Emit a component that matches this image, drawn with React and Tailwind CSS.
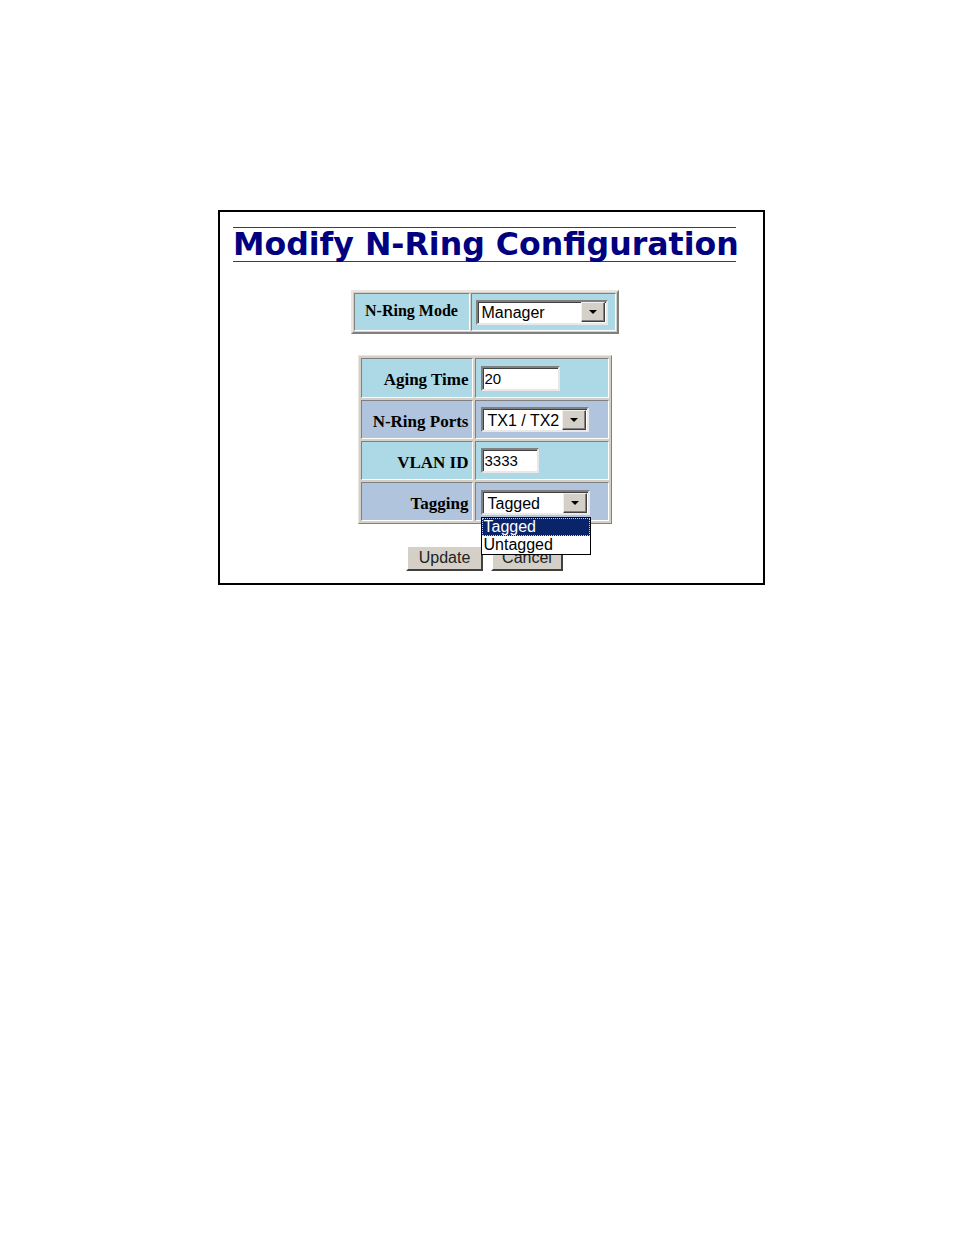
import React from 'react';

const serif = { fontFamily: '"Liberation Serif", "Times New Roman", serif' };
const sans = { fontFamily: '"Liberation Sans", Arial, sans-serif' };

const Arrow = () => (
  <div className="flex items-center justify-center w-[24px] h-[20px] bg-[#d4d0c8] border border-t-[#f0f0f0] border-l-[#f0f0f0] border-b-[#404040] border-r-[#404040] shadow-[inset_-1px_-1px_0_#808080]">
    <svg width="8" height="4" viewBox="0 0 8 4">
      <polygon points="0,0 8,0 4,4" fill="#000" />
    </svg>
  </div>
);

const Select = ({ value, width, pad = 5 }) => (
  <div
    className="inline-flex items-center justify-between h-[25px] bg-white border-2 border-t-[#808080] border-l-[#808080] border-b-[#e8e8e8] border-r-[#e8e8e8] shadow-[inset_1px_1px_0_#404040] pr-[1px]"
    style={{ width, paddingLeft: pad }}
  >
    <span className="text-[16px] leading-none text-black pt-[2px]" style={sans}>{value}</span>
    <Arrow />
  </div>
);

const Input = ({ value, width }) => (
  <div
    className="inline-flex items-center h-[25px] bg-white border-2 border-t-[#808080] border-l-[#808080] border-b-[#e8e8e8] border-r-[#e8e8e8] shadow-[inset_1px_1px_0_#404040] pl-[2px]"
    style={{ width }}
  >
    <span className="text-[15px] leading-none text-black" style={sans}>{value}</span>
  </div>
);

const cell = 'border border-t-[#808080] border-l-[#808080] border-b-white border-r-white';

const Label = ({ children, bg, w }) => (
  <td className={`${cell} ${bg} text-right align-middle pr-[3px] pt-[4px] font-bold text-[17px] text-black`} style={{ ...serif, width: w }}>
    {children}
  </td>
);

export default function App() {
  return (
    <div className="w-[954px] h-[1235px] bg-white pt-[210px] pl-[218px]">
      <div className="w-[547px] h-[375px] border-2 border-black pt-[15px] pl-[13px]">
        <div className="w-[503px] flex flex-col items-center">
          <div
            className="w-full border-t border-b border-[#3030b0] text-[31.6px] leading-[33px] font-bold text-[#000080] whitespace-nowrap"
            style={{ fontFamily: '"DejaVu Sans", Verdana, sans-serif' }}
          >
            Modify N-Ring Configuration
          </div>

          <table className="mt-[28px] border-separate border-spacing-[1px] bg-[#d4d0c8] border-2 border-t-[#e8e6e0] border-l-[#e8e6e0] border-b-[#808080] border-r-[#808080]">
            <tbody>
              <tr className="h-[38px]">
                <td className={`${cell} bg-[#add8e6] text-center font-bold text-[16px] pb-[2px] px-[6px] w-[116px]`} style={serif}>
                  N-Ring Mode
                </td>
                <td className={`${cell} bg-[#add8e6] pl-[4px] pr-[7px] w-[145px]`}>
                  <Select value="Manager" width={132} pad={4} />
                </td>
              </tr>
            </tbody>
          </table>

          <table className="mt-[21px] border-separate border-spacing-[2px] bg-[#d4d0c8] border border-t-[#e8e6e0] border-l-[#e8e6e0] border-b-[#808080] border-r-[#808080]">
            <tbody>
              <tr className="h-[40px]">
                <Label bg="bg-[#add8e6]" w={112}>Aging Time</Label>
                <td className={`${cell} bg-[#add8e6] pl-[5px] w-[134px]`}>
                  <Input value="20" width={79} />
                </td>
              </tr>
              <tr className="h-[39px]">
                <Label bg="bg-[#b0c4de]" w={112}>N-Ring Ports</Label>
                <td className={`${cell} bg-[#b0c4de] pl-[5px]`}>
                  <Select value="TX1 / TX2" width={108} />
                </td>
              </tr>
              <tr className="h-[39px]">
                <Label bg="bg-[#add8e6]" w={112}>VLAN ID</Label>
                <td className={`${cell} bg-[#add8e6] pl-[5px]`}>
                  <Input value="3333" width={58} />
                </td>
              </tr>
              <tr className="h-[39px]">
                <Label bg="bg-[#b0c4de]" w={112}>Tagging</Label>
                <td className={`${cell} bg-[#b0c4de] pl-[5px] pt-[1px]`}>
                  <div className="relative inline-block align-middle">
                    <Select value="Tagged" width={109} />
                    <div className="absolute left-0 top-[27px] w-[110px] bg-white border border-black z-10 text-[16px] leading-[18px]" style={sans}>
                      <div className="bg-[#0a246a] text-white px-[2px] outline-1 outline-dotted outline-[#d4d0c8] -outline-offset-1">Tagged</div>
                      <div className="text-black px-[2px]">Untagged</div>
                    </div>
                  </div>
                </td>
              </tr>
            </tbody>
          </table>

          <div className="mt-[21px] flex gap-[8px]" style={sans}>
            <button className="w-[77px] h-[26px] bg-[#d4d0c8] border-2 border-t-white border-l-white border-b-[#404040] border-r-[#404040] text-[16px] text-[#222] leading-none">
              Update
            </button>
            <button className="w-[72px] h-[26px] bg-[#d4d0c8] border-2 border-t-white border-l-white border-b-[#404040] border-r-[#404040] text-[16px] text-[#222] leading-none">
              Cancel
            </button>
          </div>
        </div>
      </div>
    </div>
  );
}
